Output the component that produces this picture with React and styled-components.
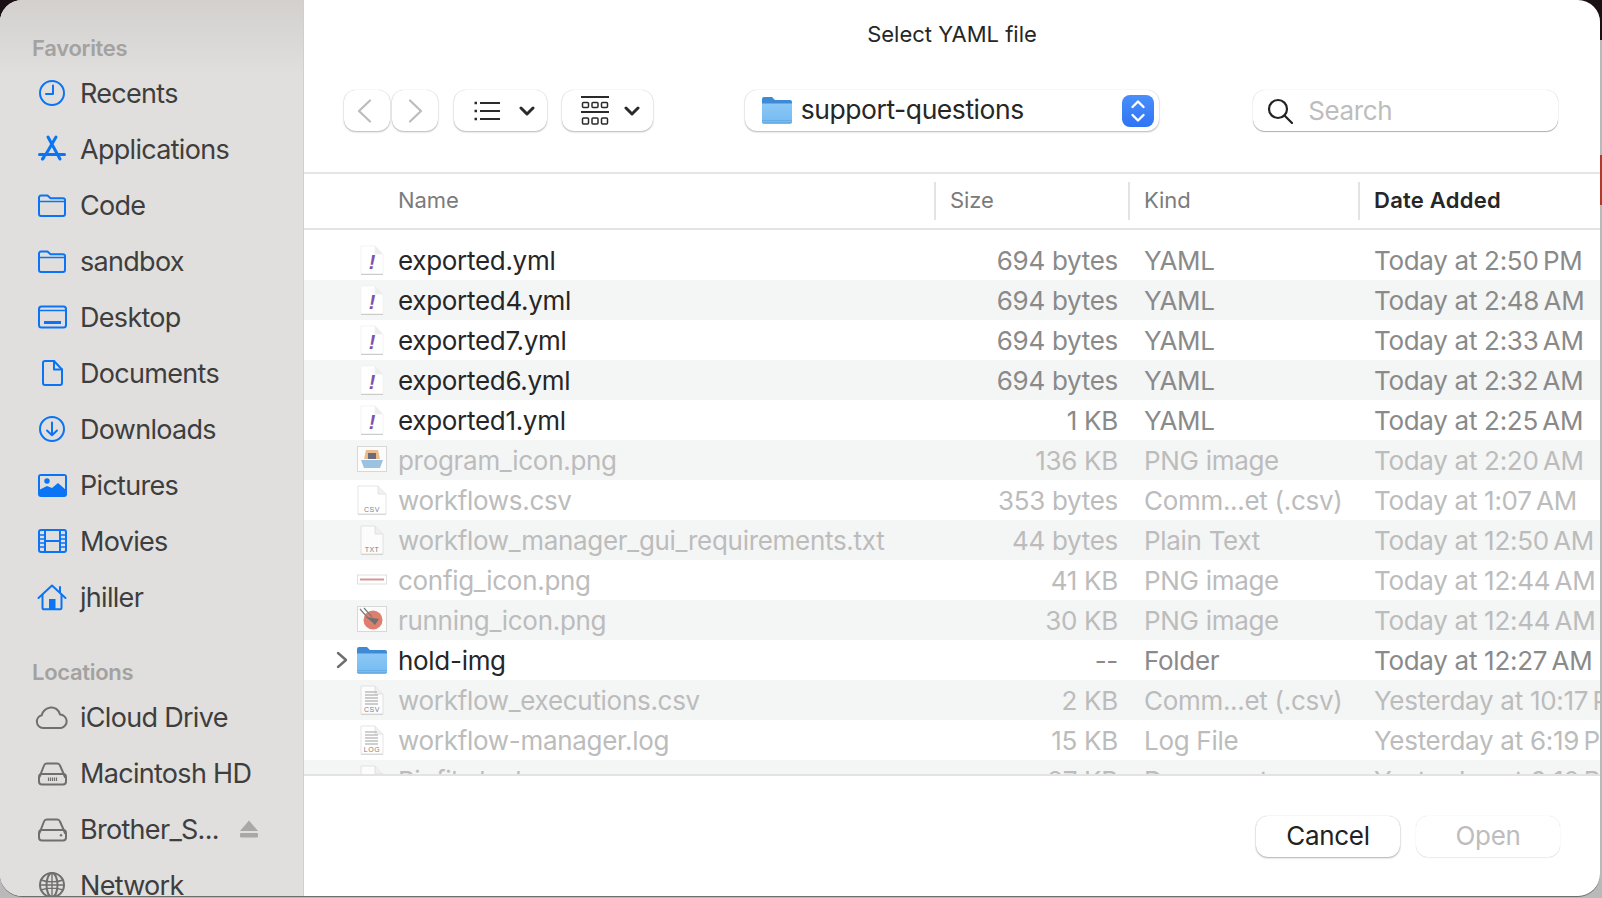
import React from "react";
import styled, { createGlobalStyle } from "styled-components";

const Global = createGlobalStyle`
  html, body { margin: 0; padding: 0; height: 100%; overflow: hidden; }
  body { font-family: Inter, "Liberation Sans", sans-serif; -webkit-font-smoothing: antialiased; }
`;

const Page = styled.div`
  width: 1602px;
  height: 898px;
  overflow: hidden;
  background:
    linear-gradient(#b23a2a, #b23a2a) right 155px / 2px 50px no-repeat,
    linear-gradient(to bottom, #1b1114 0 40px, #b9b9b9 40px);
`;
const Win = styled.div`
  width: 1600px;
  height: 896px;
  display: flex;
  overflow: hidden;
  background: #fff;
  border-radius: 22px;
  box-shadow: 0 1px 0 #6f6f6f;
`;
const Sidebar = styled.aside`
  flex: 0 0 304px;
  box-sizing: border-box;
  height: 896px;
  padding-top: 31px;
  overflow: hidden;
  background: linear-gradient(to bottom, #d3d0ce 0, #e0dfdd 75px, #e0dfdd 100%);
  border-right: 1px solid #d0cfcd;
`;
const SectionLabel = styled.div`
  height: 34px;
  line-height: 34px;
  margin-top: ${p => (p.$spaced ? "30px" : "0")};
  padding-left: 32px;
  font-size: 22px;
  font-weight: 600;
  letter-spacing: -0.3px;
  color: #a3a2a1;
`;
const SideItem = styled.div`
  height: 56px;
  display: flex;
  align-items: center;
  color: #3e3e3e;
  font-size: 27px;
  letter-spacing: -0.7px;
`;
const SideIcon = styled.span`
  flex: 0 0 80px;
  display: flex;
  justify-content: center;
  padding-left: 24px;
  box-sizing: border-box;
  svg { display: block; }
`;
const Eject = styled.span`
  margin-left: 20px;
  display: flex;
`;
const Main = styled.main`
  flex: 1;
  min-width: 0;
  display: flex;
  flex-direction: column;
`;
const TitleBar = styled.div`
  height: 68px;
  line-height: 68px;
  text-align: center;
  font-size: 22px;
  font-weight: 400;
  letter-spacing: 0;
  color: #262626;
`;
const Toolbar = styled.div`
  height: 104px;
  box-sizing: border-box;
  padding: 22px 42px 0 40px;
  display: flex;
  align-items: flex-start;
`;
const Tool = styled.button`
  box-sizing: border-box;
  height: 41px;
  width: ${p => p.$w}px;
  margin-left: ${p => p.$ml || 0}px;
  padding: 0 ${p => p.$pr || 0}px 0 ${p => p.$pl || 0}px;
  border: 0;
  border-radius: 12px;
  background: #fff;
  box-shadow: 0 1px 2px rgba(0,0,0,.28), 0 0 1px rgba(0,0,0,.22);
  display: flex;
  align-items: center;
  justify-content: center;
  gap: ${p => p.$gap || 0}px;
  svg { display: block; }
`;
const Popup = styled(Tool)`
  justify-content: flex-start;
  padding: 0 5px 0 17px;
  font-family: inherit;
  font-size: 26.5px;
  letter-spacing: -0.45px;
  color: #262626;
`;
const PopupLabel = styled.span`
  flex: 1;
  margin-left: 9px;
  padding-bottom: 4px;
  text-align: left;
`;
const Stepper = styled.span`
  width: 32px;
  height: 32px;
  border-radius: 8px;
  background: linear-gradient(#4a8ffb, #2f74f3);
  display: flex;
  align-items: center;
  justify-content: center;
`;
const SearchBox = styled(Tool)`
  justify-content: flex-start;
  padding-left: 14px;
  gap: 15px;
  box-shadow: 0 1px 1px rgba(0,0,0,.3), 0 0 1px rgba(0,0,0,.25);
  font-family: inherit;
  font-size: 26px;
  letter-spacing: -0.4px;
  color: #bdbdbd;
`;
const HeaderRow = styled.div`
  height: 58px;
  box-sizing: border-box;
  display: grid;
  grid-template-columns: 630px 194px 230px 242px;
  align-items: center;
  border-top: 2px solid #e6e6e6;
  border-bottom: 2px solid #e3e3e3;
`;
const HeaderCell = styled.div`
  height: 38px;
  line-height: 36px;
  box-sizing: border-box;
  padding-left: ${p => (p.$first ? "94px" : "14px")};
  border-left: ${p => (p.$first ? "0" : "2px solid #e3e3e3")};
  font-size: 22px;
  letter-spacing: ${p => (p.$active ? "0.25px" : "-0.1px")};
  font-weight: ${p => (p.$active ? 600 : 400)};
  color: ${p => (p.$active ? "#262626" : "#7b7b7b")};
`;
const List = styled.div`
  height: 546px;
  box-sizing: border-box;
  padding-top: 10px;
  overflow: hidden;
  border-bottom: 2px solid #e3e3e3;
`;
const Row = styled.div`
  height: 40px;
  display: grid;
  grid-template-columns: 630px 194px 230px 242px;
  align-items: center;
  font-size: 26px;
  letter-spacing: -0.3px;
  white-space: nowrap;
  overflow: hidden;
  background: ${p => (p.$odd ? "#f4f5f5" : "#fff")};
`;
const NameCell = styled.div`
  display: flex;
  align-items: center;
  height: 40px;
  color: ${p => (p.$dim ? "#bcbcbc" : "#262626")};
`;
const Disclosure = styled.span`
  flex: 0 0 53px;
  box-sizing: border-box;
  padding-left: 32px;
  display: flex;
`;
const FileIcon = styled.span`
  flex: 0 0 30px;
  width: 30px;
  margin-right: 11px;
  display: flex;
  justify-content: center;
  opacity: ${p => (p.$dim ? 0.75 : 1)};
  svg { display: block; }
`;
const SizeCell = styled.div`
  text-align: right;
  padding-right: 10px;
  color: ${p => (p.$dim ? "#bcbcbc" : "#8a8a8a")};
`;
const KindCell = styled.div`
  padding-left: 16px;
  color: ${p => (p.$dim ? "#bcbcbc" : "#8a8a8a")};
`;
const DateCell = styled.div`
  padding-left: 16px;
  overflow: hidden;
  color: ${p => (p.$dim ? "#bcbcbc" : "#8a8a8a")};
`;
const Footer = styled.div`
  flex: 1;
  display: flex;
  justify-content: flex-end;
  align-items: flex-start;
  gap: 16px;
  padding: 40px 40px 0 0;
`;
const ActionButton = styled.button`
  width: 144px;
  height: 41px;
  padding: 0 0 2px;
  border: 0;
  border-radius: 12px;
  background: #fff;
  font-family: inherit;
  font-size: 26px;
  letter-spacing: -0.3px;
  color: ${p => (p.disabled ? "#bdbdbd" : "#222")};
  box-shadow: ${p => (p.disabled
    ? "0 0 1px rgba(0,0,0,.2), 0 1px 1px rgba(0,0,0,.06)"
    : "0 1px 2px rgba(0,0,0,.3), 0 0 1px rgba(0,0,0,.25)")};
`;

const B = "#0a74f5";
const G = "#6f6f6f";
const Stroke = ({ w = 30, h = 30, c = B, children }) => (
  <svg width={w} height={h} viewBox="0 0 30 30" fill="none" stroke={c} strokeWidth="2" strokeLinecap="round" strokeLinejoin="round">{children}</svg>
);
const Clock = () => <Stroke><circle cx="15" cy="15" r="12" /><path d="M16 7.5V16H9" /></Stroke>;
const Apps = () => (
  <Stroke>
    <path d="M11 3l12 22M19 3L8.500 21M2.500 20.500h25" strokeWidth="3" />
    <path d="M5.500 25l1.500-2" strokeWidth="3.200" />
  </Stroke>
);
const Folder = () => <Stroke><path d="M2 7.5a2 2 0 0 1 2-2h6.5l3 2.7H26a2 2 0 0 1 2 2V24a2 2 0 0 1-2 2H4a2 2 0 0 1-2-2z" /><path d="M2 11.5h26" strokeWidth="1.6" /></Stroke>;
const Desktop = () => <Stroke><rect x="2" y="4.5" width="27" height="21" rx="2.5" /><path d="M2 8.5h27" strokeWidth="1.6" /><path d="M7 20.5h17" strokeWidth="3" strokeLinecap="butt" /></Stroke>;
const Doc = () => <Stroke><path d="M6 5a2 2 0 0 1 2-2h9l8 8.5V25a2 2 0 0 1-2 2H8a2 2 0 0 1-2-2z" /><path d="M17 3v8.5h8" /></Stroke>;
const Down = () => <Stroke><circle cx="15" cy="15" r="12" /><path d="M15 8.5V21M10 16.5l5 4.8 5-4.8" /></Stroke>;
const Pictures = () => (
  <svg width="30" height="30" viewBox="0 0 30 30">
    <rect x="1" y="4" width="29" height="23" rx="3" fill={B} />
    <rect x="3" y="6" width="25" height="19" fill="#e0dfdd" />
    <circle cx="10" cy="11" r="2.7" fill={B} />
    <path d="M2 24v-4l8-4 5 2 6-5 8 7v4a2 2 0 0 1-2 2H4a2 2 0 0 1-2-2z" fill={B} />
  </svg>
);
const Movies = () => (
  <Stroke>
    <rect x="2" y="4" width="27" height="22" rx="2" />
    <path d="M8 4v22M23 4v22M8 15h15" />
    <path d="M3 9h4M3 13h4M3 17h4M3 21h4M24 9h4M24 13h4M24 17h4M24 21h4" strokeWidth="1.6" strokeLinecap="butt" />
  </Stroke>
);
const Home = () => (
  <Stroke>
    <path d="M1.5 16L15 3.5 28.5 16M23 5v6" />
    <path d="M5.5 13v13a1.3 1.3 0 0 0 1.3 1.3h16.4a1.3 1.3 0 0 0 1.3-1.3V13" />
    <rect x="12" y="17" width="6.5" height="10" fill={B} stroke="none" />
  </Stroke>
);
const Cloud = () => <svg width="34" height="30" viewBox="0 0 34 30" fill="none" stroke={G} strokeWidth="2" strokeLinejoin="round"><path d="M8 26a6.5 6.5 0 0 1-1.2-12.8C8 8.500 11.800 6 15.500 5.500 20 5 24 8 25 12.500a6.800 6.800 0 0 1 1 13.500z" /></svg>;
const Disk = ({ vents }) => (
  <Stroke c={G}>
    <path d="M2.500 19L7 7.500A3 3 0 0 1 9.800 5.500h10.400A3 3 0 0 1 23 7.500L28 19" />
    <rect x="2" y="16" width="27" height="10.500" rx="3" />
    {vents
      ? <path d="M11.500 19.500v3.500M13.500 19.500v3.500M15.500 19.500v3.500M17.500 19.500v3.500M19.500 19.500v3.500" strokeWidth="1.200" strokeLinecap="butt" />
      : <circle cx="24" cy="21.300" r="1.200" fill={G} stroke="none" />}
  </Stroke>
);
const Globe = () => (
  <Stroke c={G}>
    <circle cx="15" cy="15" r="12" />
    <ellipse cx="15" cy="15" rx="5.500" ry="12" />
    <path d="M15 3v24M4 10c6 2.500 16 2.500 22 0M4 20c6-2.500 16-2.500 22 0M3 15h24" strokeWidth="1.400" />
  </Stroke>
);
const EjectIcon = () => (
  <svg width="20" height="20" viewBox="0 0 20 20" fill="#a9a8a7">
    <path d="M10 1.500L19 12H1z" /><rect x="1" y="14" width="18" height="4.500" rx="1" />
  </svg>
);
const Back = ({ flip }) => (
  <svg width="15" height="24" viewBox="0 0 15 24" fill="none" stroke="#bcbcbc" strokeWidth="2.200" strokeLinecap="round" strokeLinejoin="round">
    <path d={flip ? "M2 1.500L13 12 2 22.500" : "M13 1.500L2 12l11 10.500"} />
  </svg>
);
const Caret = () => (
  <svg width="16" height="10" viewBox="0 0 16 10" fill="none" stroke="#2a2a2a" strokeWidth="3" strokeLinecap="round" strokeLinejoin="round"><path d="M2 2l6 6 6-6" /></svg>
);
const ListGlyph = () => (
  <svg width="26" height="20" viewBox="0 0 26 20" fill="none" stroke="#2a2a2a" strokeWidth="1.800">
    <path d="M6 2h20M6 10h20M6 18h20" />
    <path d="M0.500 2h2.500M0.500 10h2.500M0.500 18h2.500" strokeWidth="2.400" />
  </svg>
);
const GridGlyph = () => (
  <svg width="28" height="30" viewBox="0 0 28 30" fill="none" stroke="#2a2a2a" strokeWidth="1.500">
    <path d="M0 1h28M0 16h28" strokeWidth="1.800" />
    <rect x="1.500" y="6.500" width="6" height="5" rx="1" />
    <rect x="11" y="6.500" width="6" height="5" rx="1" />
    <rect x="20.500" y="6.500" width="6" height="5" rx="1" />
    <rect x="1.500" y="22" width="6" height="6" rx="1" />
    <rect x="11" y="22" width="6" height="6" rx="1" />
    <rect x="20.500" y="22" width="6" height="6" rx="1" />
  </svg>
);
const BlueFolder = ({ w = 30, h = 29 }) => (
  <svg width={w} height={h} viewBox="0 0 30 29">
    <defs>
      <linearGradient id="fb" x1="0" y1="0" x2="0" y2="1"><stop offset="0" stopColor="#8cc8f6" /><stop offset="1" stopColor="#74baf1" /></linearGradient>
    </defs>
    <path d="M0 3a2 2 0 0 1 2-2h8l3 3h15a2 2 0 0 1 2 2v6H0z" fill="#3f8ad6" />
    <path d="M0 7.500h30V26a2 2 0 0 1-2 2H2a2 2 0 0 1-2-2z" fill="url(#fb)" />
    <path d="M0 24.500h30M0 26.500h30" stroke="#5fa6e2" strokeWidth=".7" />
  </svg>
);
const Chevron = () => (
  <svg width="12" height="18" viewBox="0 0 12 18" fill="none" stroke="#6e6e6e" strokeWidth="2.400" strokeLinecap="round" strokeLinejoin="round"><path d="M2 2l8 7-8 7" /></svg>
);
const Sheet = ({ wide, faint, children }) => {
  const l = wide ? 1 : 4, r = wide ? 29 : 26;
  const side = faint ? "#f0f0f0" : "#d4d4d4";
  return (
    <svg width="30" height="32" viewBox="0 0 30 32">
      <path d={`M${l} 2h${r - l - 8}l8 8v20H${l}z`} fill="#fff" stroke={side} strokeWidth=".8" />
      <path d={`M${r - 8} 2v8h8`} fill="#ededed" stroke={side} strokeWidth=".8" />
      <path d={`M${l} 30.400h${r - l}`} stroke="#c6c6c6" strokeWidth="1" />
      {children}
    </svg>
  );
};
const Yaml = () => <Sheet faint><text x="15" y="25" fontFamily="Liberation Sans, sans-serif" fontStyle="italic" fontWeight="700" fontSize="20" fill="#7d4fb0" textAnchor="middle">!</text></Sheet>;
const Tagged = ({ tag, wide, lines }) => (
  <Sheet wide={wide}>
    {lines && <path d="M8 8h12M8 11h13M8 14h13M8 17h13M8 20h13" stroke="#aaa" strokeWidth="1.300" />}
    <text x="15" y="28" fontFamily="Liberation Sans, sans-serif" fontSize="7" letterSpacing=".5" fill="#555" textAnchor="middle">{tag}</text>
  </Sheet>
);
const Thumb = ({ kind }) => {
  if (kind === "bar") {
    return (
      <svg width="30" height="32" viewBox="0 0 30 32">
        <rect x="0.500" y="11" width="29" height="9" fill="#fff" stroke="#d6d6d6" />
        <path d="M3 15.500h24" stroke="#c4776e" strokeWidth="2" />
      </svg>
    );
  }
  return (
    <svg width="30" height="30" viewBox="0 0 30 30">
      <rect x="0.500" y="1.500" width="29" height="25" fill="#fff" stroke="#cfcfcf" />
      {kind === "boat"
        ? <g><path d="M4 15h22l-3 8H7z" fill="#7fb1dc" /><path d="M9 5h12l2 9H7z" fill="#eaa869" /><rect x="11" y="8" width="8" height="6" fill="#3c3f55" /></g>
        : <g><circle cx="16" cy="15" r="9.500" fill="#d9573f" /><path d="M3 4l8 9M7 3l8 9" stroke="#555" strokeWidth="1.200" /><path d="M9 12l13 2-4 6-3-3z" fill="#444" /></g>}
    </svg>
  );
};

const favorites = [
  ["Recents", Clock], ["Applications", Apps], ["Code", Folder], ["sandbox", Folder],
  ["Desktop", Desktop], ["Documents", Doc], ["Downloads", Down], ["Pictures", Pictures],
  ["Movies", Movies], ["jhiller", Home],
];
const locations = [
  ["iCloud Drive", Cloud], ["Macintosh HD", () => <Disk vents />], ["Brother_S...", () => <Disk />, true], ["Network", Globe],
];
const t = s => s.replace(" PM", "\u202fPM").replace(" AM", "\u202fAM");
const files = [
  ["exported.yml", "694 bytes", "YAML", "Today at 2:50 PM", <Yaml />],
  ["exported4.yml", "694 bytes", "YAML", "Today at 2:48 AM", <Yaml />],
  ["exported7.yml", "694 bytes", "YAML", "Today at 2:33 AM", <Yaml />],
  ["exported6.yml", "694 bytes", "YAML", "Today at 2:32 AM", <Yaml />],
  ["exported1.yml", "1 KB", "YAML", "Today at 2:25 AM", <Yaml />],
  ["program_icon.png", "136 KB", "PNG image", "Today at 2:20 AM", <Thumb kind="boat" />, true],
  ["workflows.csv", "353 bytes", "Comm...et (.csv)", "Today at 1:07 AM", <Tagged tag="CSV" wide />, true],
  ["workflow_manager_gui_requirements.txt", "44 bytes", "Plain Text", "Today at 12:50 AM", <Tagged tag="TXT" />, true],
  ["config_icon.png", "41 KB", "PNG image", "Today at 12:44 AM", <Thumb kind="bar" />, true],
  ["running_icon.png", "30 KB", "PNG image", "Today at 12:44 AM", <Thumb kind="run" />, true],
  ["hold-img", "--", "Folder", "Today at 12:27 AM", <BlueFolder />, false, true],
  ["workflow_executions.csv", "2 KB", "Comm...et (.csv)", "Yesterday at 10:17 PM", <Tagged tag="CSV" lines />, true],
  ["workflow-manager.log", "15 KB", "Log File", "Yesterday at 6:19 PM", <Tagged tag="LOG" lines />, true],
  ["Pipfile.lock", "27 KB", "Document", "Yesterday at 6:10 PM", <Tagged tag="" />, true],
];

const SideRow = ({ label, Icon, eject }) => (
  <SideItem>
    <SideIcon><Icon /></SideIcon>
    <span>{label}</span>
    {eject && <Eject><EjectIcon /></Eject>}
  </SideItem>
);

export default function App() {
  return (
    <>
      <Global />
      <Page>
        <Win>
          <Sidebar>
            <SectionLabel>Favorites</SectionLabel>
            {favorites.map(([l, I]) => <SideRow key={l} label={l} Icon={I} />)}
            <SectionLabel $spaced>Locations</SectionLabel>
            {locations.map(([l, I, e]) => <SideRow key={l} label={l} Icon={I} eject={e} />)}
          </Sidebar>
          <Main>
            <TitleBar>Select YAML file</TitleBar>
            <Toolbar>
              <Tool $w={46} $pr={4}><Back /></Tool>
              <Tool $w={46} $ml={2} $pl={2}><Back flip /></Tool>
              <Tool $w={93} $ml={16} $gap={19} $pl={8}><ListGlyph /><Caret /></Tool>
              <Tool $w={91} $ml={15} $gap={15} $pl={6}><GridGlyph /><Caret /></Tool>
              <Popup $w={415} $ml={92}>
                <BlueFolder />
                <PopupLabel>support-questions</PopupLabel>
                <Stepper>
                  <svg width="16" height="24" viewBox="0 0 16 24" fill="none" stroke="#fff" strokeWidth="2.400" strokeLinecap="round" strokeLinejoin="round"><path d="M2.500 8L8 2.500 13.500 8M2.500 16L8 21.500 13.500 16" /></svg>
                </Stepper>
              </Popup>
              <SearchBox $w={305} $ml={94}>
                <svg width="26" height="26" viewBox="0 0 26 26" fill="none" stroke="#222" strokeWidth="2.200" strokeLinecap="round"><circle cx="11" cy="11" r="9" /><path d="M17.500 17.500L25 25" /></svg>
                <span>Search</span>
              </SearchBox>
            </Toolbar>
            <HeaderRow>
              <HeaderCell $first>Name</HeaderCell>
              <HeaderCell>Size</HeaderCell>
              <HeaderCell>Kind</HeaderCell>
              <HeaderCell $active>Date Added</HeaderCell>
            </HeaderRow>
            <List>
              {files.map(([name, size, kind, date, icon, dim, folder], i) => (
                <Row key={name} $odd={i % 2 === 1}>
                  <NameCell $dim={dim}>
                    <Disclosure>{folder && <Chevron />}</Disclosure>
                    <FileIcon $dim={dim}>{icon}</FileIcon>
                    <span>{name}</span>
                  </NameCell>
                  <SizeCell $dim={dim}>{size}</SizeCell>
                  <KindCell $dim={dim}>{kind}</KindCell>
                  <DateCell $dim={dim}>{t(date)}</DateCell>
                </Row>
              ))}
            </List>
            <Footer>
              <ActionButton>Cancel</ActionButton>
              <ActionButton disabled>Open</ActionButton>
            </Footer>
          </Main>
        </Win>
      </Page>
    </>
  );
}
